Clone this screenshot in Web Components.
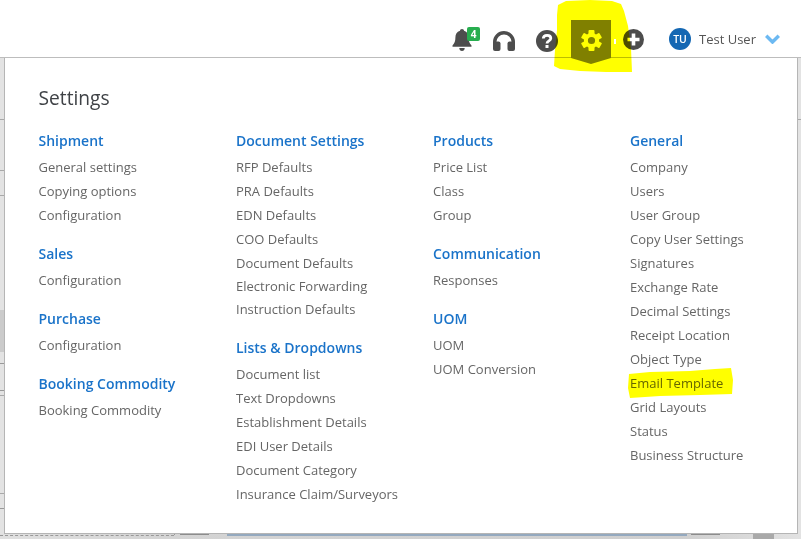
<!DOCTYPE html>
<html>
<head>
<meta charset="utf-8">
<style>
	html, body { margin: 0; padding: 0; height: 100%; overflow: hidden; }
	body { font-family: "Open Sans", sans-serif; background: #e3e3e3; }
	#page { position: relative; width: 801px; height: 539px; display: flex; flex-direction: column; }
</style>
</head>
<body>
<div id="page">
	<page-backdrop></page-backdrop>
	<top-bar user="Test User" initials="TU" count="4"></top-bar>
	<settings-panel title="Settings">
		<menu-column>
			<menu-group heading="Shipment" items="General settings,Copying options,Configuration"></menu-group>
			<menu-group heading="Sales" items="Configuration"></menu-group>
			<menu-group heading="Purchase" items="Configuration"></menu-group>
			<menu-group heading="Booking Commodity" items="Booking Commodity"></menu-group>
		</menu-column>
		<menu-column>
			<menu-group heading="Document Settings" items="RFP Defaults,PRA Defaults,EDN Defaults,COO Defaults,Document Defaults,Electronic Forwarding,Instruction Defaults" tight="Electronic Forwarding,Instruction Defaults"></menu-group>
			<menu-group heading="Lists &amp; Dropdowns" items="Document list,Text Dropdowns,Establishment Details,EDI User Details,Document Category,Insurance Claim/Surveyors"></menu-group>
		</menu-column>
		<menu-column>
			<menu-group heading="Products" items="Price List,Class,Group"></menu-group>
			<menu-group heading="Communication" items="Responses"></menu-group>
			<menu-group heading="UOM" items="UOM,UOM Conversion"></menu-group>
		</menu-column>
		<menu-column>
			<menu-group heading="General" items="Company,Users,User Group,Copy User Settings,Signatures,Exchange Rate,Decimal Settings,Receipt Location,Object Type,Email Template,Grid Layouts,Status,Business Structure"></menu-group>
		</menu-column>
	</settings-panel>
	<marker-scribble></marker-scribble>
</div>

<script>
// what can still be seen of the page behind the open menu
class PageBackdrop extends HTMLElement {
	constructor() {
		super();
		this.shadow = this.attachShadow({ mode: "open" });
	}

	connectedCallback() {
		let lines = [119, 170, 195, 395, 493]
			.map((y) => `<i style="left:0;top:${y}px;width:4px;height:1px;background:#a9a9a9"></i>`)
			.join("");
		let dashes = [363, 390, 508]
			.map((y) => `<i class="dash" style="left:0;top:${y}px;width:4px"></i>`)
			.join("");

		this.shadow.innerHTML = `
			<style>
				:host { position: absolute; left: 0; top: 0; width: 801px; height: 539px; overflow: hidden; }
				i { position: absolute; display: block; }
				.dash { height: 0; border-top: 1px dashed #999; }
			</style>
			${lines}${dashes}
			<i style="left:0;top:310px;width:4px;height:42px;background:#cbcbcb"></i>
			<i style="left:0;top:534px;width:801px;height:5px;background:linear-gradient(90deg,#e0e0e0,#d4d4d4 20%,#cfcfcf 85%,#e2e2e2)"></i>
			<i class="dash" style="left:0;top:535px;width:174px"></i>
			<i style="left:174px;top:530px;width:1px;height:5px;background:#999"></i>
			<i style="left:180px;top:534px;width:29px;height:1px;background:#8c8c8c"></i>
			<i style="left:227px;top:534px;width:460px;height:2px;background:#94a9bf"></i>
			<i style="left:691px;top:534px;width:29px;height:1px;background:#8c8c8c"></i>
			<i style="left:753px;top:534px;width:21px;height:5px;background:#a9a9a9"></i>
			<i style="left:798px;top:119px;width:3px;height:1px;background:#a9a9a9"></i>
		`;
	}
}

class TopBar extends HTMLElement {
	constructor() {
		super();
		this.shadow = this.attachShadow({ mode: "open" });
	}

	connectedCallback() {
		let teeth = [0, 60, 120, 180, 240, 300]
			.map((a) => `<rect x="7.500" y="0" width="6" height="6" rx="1" transform="rotate(${a} 10.500 10.500)"/>`)
			.join("");

		this.shadow.innerHTML = `
			<style>
				:host {
					display: flex;
					flex: none;
					height: 58px;
					box-sizing: border-box;
					background: #fff;
					border-bottom: 1px solid #bdbdbd;
					position: relative;
					z-index: 1;
					align-items: flex-start;
					padding: 20px 0 0 451px;
				}
				svg { display: block; flex: none; }
				.bell { position: relative; width: 30px; height: 31px; flex: none; }
				.bell svg { position: absolute; left: 1px; top: 9px; }
				.count {
					position: absolute;
					left: 16px;
					top: 7px;
					width: 13px;
					height: 14px;
					border-radius: 2px;
					background: #27ae4f;
					color: #fff;
					font: 700 10px/14px "Open Sans", sans-serif;
					text-align: center;
				}
				.tab {
					flex: none;
					display: flex;
					justify-content: center;
					width: 40px;
					height: 44px;
					margin-left: 13px;
					padding-top: 10px;
					box-sizing: border-box;
					background: #808080;
					clip-path: polygon(0 0, 100% 0, 100% 38px, 50% 100%, 0 38px);
				}
				.user {
					display: flex;
					align-items: center;
					margin: 8px 0 0 25px;
					height: 22px;
					color: #555;
					font-size: 13px;
					line-height: 22px;
				}
				.avatar {
					width: 22px;
					height: 22px;
					border-radius: 50%;
					background: #1467b3;
					color: #fff;
					font-size: 10.5px;
					font-weight: 600;
					text-align: center;
					margin-right: 8px;
				}
				.chevron { margin-left: 9px; }
			</style>
			<div class="bell">
				<svg width="20" height="22" viewBox="0 0 20 22">
					<path fill="#4d4d4d" d="M10 0c1.200 0 2 .8 2 1.800 3.200.8 4.600 3.500 4.600 6.700 0 3.800.8 5.700 2.900 7.900v1.300H.5v-1.300C2.600 14.200 3.400 12.300 3.400 8.500c0-3.200 1.400-5.900 4.600-6.700C8 .8 8.800 0 10 0z"/>
					<path fill="#4d4d4d" d="M7.300 19h5.400c0 1.700-1.100 3-2.700 3s-2.700-1.300-2.700-3z"/>
				</svg>
				<span class="count">${this.getAttribute("count")}</span>
			</div>
			<svg width="22" height="20" viewBox="0 0 22 20" style="margin:11px 0 0 12px">
				<path fill="none" stroke="#4d4d4d" stroke-width="3.400" d="M1.700 15V11a9.300 9.300 0 0 1 18.600 0V15"/>
				<rect x="0" y="10.500" width="7.500" height="9.500" rx="2" fill="#4d4d4d"/>
				<rect x="14.500" y="10.500" width="7.500" height="9.500" rx="2" fill="#4d4d4d"/>
			</svg>
			<svg width="22" height="22" viewBox="0 0 22 22" style="margin:10px 0 0 21px">
				<circle cx="11" cy="11" r="11" fill="#4d4d4d"/>
				<path fill="none" stroke="#fff" stroke-width="2.800" d="M7.300 8.600c0-2.200 1.700-3.300 3.800-3.300s3.700 1.100 3.700 3c0 2.700-3.800 2.500-3.800 5.300"/>
				<rect x="9.500" y="15" width="3" height="3" fill="#fff"/>
			</svg>
			<div class="tab">
				<svg width="21" height="21" viewBox="0 0 21 21">
					<g fill="#fff">${teeth}</g>
					<circle cx="10.500" cy="10.500" r="5.600" fill="none" stroke="#fff" stroke-width="4"/>
				</svg>
			</div>
			<svg width="21" height="21" viewBox="0 0 21 21" style="margin:9px 0 0 12px">
				<circle cx="10.500" cy="10.500" r="10.500" fill="#4d4d4d"/>
				<path stroke="#fff" stroke-width="3.600" d="M10.500 4.500v12M4.500 10.500h12"/>
			</svg>
			<div class="user">
				<div class="avatar">${this.getAttribute("initials")}</div>
				<span>${this.getAttribute("user")}</span>
				<svg class="chevron" width="15" height="10" viewBox="0 0 15 10">
					<path fill="none" stroke="#6cb9f2" stroke-width="3.500" d="M1.200 1.800L7.500 8l6.300-6.200"/>
				</svg>
			</div>
		`;
	}
}

// yellow highlighter strokes someone drew on top of the screenshot
class MarkerScribble extends HTMLElement {
	constructor() {
		super();
		this.shadow = this.attachShadow({ mode: "open" });
	}

	connectedCallback() {
		this.shadow.innerHTML = `
			<style>
				:host {
					position: absolute;
					left: 0;
					top: 0;
					z-index: 2;
					width: 801px;
					height: 539px;
					mix-blend-mode: multiply;
					pointer-events: none;
				}
			</style>
			<svg width="801" height="539" viewBox="0 0 801 539">
				<path fill="#ffff00" fill-rule="evenodd" d="M558 5 L566 1 L590 0 L612 1 L621 4 L624 11 L628 26 L631 48 L632 72 L606 72 L580 71 L560 69 L554 66 L555 50 L557 30 L557 15z M614 39h2v5h-2z"/>
				<path fill="#ffff00" d="M629 374 L650 372 L690 371 L715 369 L731 368 L733 380 L732 394 L700 395 L660 396 L630 398 L628 388z"/>
			</svg>
		`;
	}
}

class SettingsPanel extends HTMLElement {
	constructor() {
		super();
		this.shadow = this.attachShadow({ mode: "open" });
	}

	connectedCallback() {
		this.shadow.innerHTML = `
			<style>
				:host {
					display: block;
					flex: none;
					position: relative;
					box-sizing: border-box;
					width: 794px;
					height: 476px;
					margin-left: 4px;
					background: #fff;
					border: 1px solid #b5b5b5;
					border-top: 0;
					padding: 24px 0 0 33.500px;
				}
				h1 {
					margin: 0 0 15px;
					font: 400 19.2px/32px "Open Sans", sans-serif;
					color: #3f4246;
				}
				.columns {
					display: grid;
					grid-template-columns: 197.500px repeat(3, 197px);
				}
			</style>
			<h1>${this.getAttribute("title")}</h1>
			<div class="columns"><slot></slot></div>
		`;
	}
}

class MenuColumn extends HTMLElement {
	constructor() {
		super();
		this.shadow = this.attachShadow({ mode: "open" });
	}

	connectedCallback() {
		this.shadow.innerHTML = `
			<style>
				:host { display: block; }
			</style>
			<slot></slot>
		`;
	}
}

class MenuGroup extends HTMLElement {
	constructor() {
		super();
		this.shadow = this.attachShadow({ mode: "open" });
	}

	get items() {
		return this.getAttribute("items").split(",");
	}

	get tight() {
		return (this.getAttribute("tight") || "").split(",");
	}

	connectedCallback() {
		this.shadow.innerHTML = `
			<style>
				:host { display: block; margin-bottom: 15px; }
				h2 {
					margin: 0 0 2px;
					font: 600 14px/24px "Open Sans", sans-serif;
					color: #1a73c9;
				}
				ul { list-style: none; margin: 0; padding: 0; }
				li {
					font: 400 13px/24px "Open Sans", sans-serif;
					color: #666;
					white-space: nowrap;
				}
				.tight { margin-top: -1px; }
			</style>
			<h2>${this.getAttribute("heading").replace("&", "&amp;")}</h2>
			<ul>
				${this.items
					.map((r) => '<li class="' + (this.tight.includes(r) ? "tight" : "") + '">' + r + "</li>")
					.join("")}
			</ul>
		`;
	}
}

customElements.define("page-backdrop", PageBackdrop);
customElements.define("top-bar", TopBar);
customElements.define("marker-scribble", MarkerScribble);
customElements.define("settings-panel", SettingsPanel);
customElements.define("menu-column", MenuColumn);
customElements.define("menu-group", MenuGroup);
</script>
</body>
</html>
